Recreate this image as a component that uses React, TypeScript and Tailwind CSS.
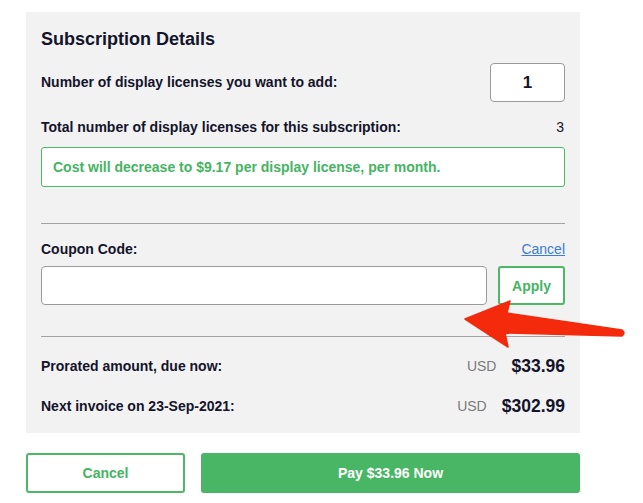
import React from "react";

const font = { fontFamily: '"Liberation Sans", Arial, sans-serif' };

function AmountRow({ label, amount }: { label: string; amount: string }) {
  return (
    <div className="flex h-[24px] items-center justify-between">
      <span className="text-[14px] font-bold text-[#14142b]">{label}</span>
      <span className="flex items-center gap-[15px]">
        <span className="text-[14px] text-[#7a7a7a]">USD</span>
        <span className="text-[17.5px] font-bold text-[#14142b]">{amount}</span>
      </span>
    </div>
  );
}

export default function App() {
  return (
    <div
      className="relative h-[503px] w-[643px] overflow-hidden bg-white pl-[26px] pt-[12px]"
      style={font}
    >
      {/* Panel */}
      <div className="w-[554px] bg-[#f2f2f2] px-[15px] pb-[15px] pt-[16px]">
        <h2 className="text-[18px] font-bold leading-[22px] text-[#14142b]">
          Subscription Details
        </h2>

        <div className="mt-[13px] flex items-center justify-between">
          <span className="text-[14px] font-bold text-[#14142b]">
            Number of display licenses you want to add:
          </span>
          <div className="flex h-[39px] w-[75px] items-center justify-center rounded-[4px] border border-[#9a9a9a] bg-white text-[17px] font-bold text-[#14142b]">
            1
          </div>
        </div>

        <div className="mt-[15px] flex h-[20px] items-center justify-between">
          <span className="text-[14px] font-bold text-[#14142b]">
            Total number of display licenses for this subscription:
          </span>
          <span className="pr-[1px] text-[14px] text-[#14142b]">3</span>
        </div>

        <div className="mt-[10px] flex h-[40px] items-center rounded-[3px] border border-[#4cb866] bg-white px-[11px] text-[14px] font-bold text-[#45b462]">
          Cost will decrease to $9.17 per display license, per month.
        </div>

        <div className="mt-[36px] h-px bg-[#a3a3a3]" />

        <div className="mt-[15px] flex h-[20px] items-center justify-between">
          <span className="text-[14px] font-bold text-[#14142b]">Coupon Code:</span>
          <a className="text-[14px] text-[#3b7dd3] underline">Cancel</a>
        </div>

        <div className="mt-[7px] flex gap-[11px]">
          <input className="h-[39px] flex-1 rounded-[4px] border border-[#9a9a9a] bg-white" />
          <button className="h-[39px] w-[67px] rounded-[3px] border-2 border-[#4cb866] bg-white pt-[1px] text-[14px] font-bold text-[#45b462]">
            Apply
          </button>
        </div>

        <div className="mt-[31px] h-px bg-[#a3a3a3]" />

        <div className="mt-[17px]">
          <AmountRow label="Prorated amount, due now:" amount="$33.96" />
        </div>
        <div className="mt-[16px]">
          <AmountRow label="Next invoice on 23-Sep-2021:" amount="$302.99" />
        </div>
      </div>

      {/* Buttons */}
      <div className="mt-[20px] flex w-[554px] gap-[16px]">
        <button className="h-[40px] w-[159px] rounded-[3px] border-2 border-[#4cb866] bg-white text-[14px] font-bold text-[#45b462]">
          Cancel
        </button>
        <button className="h-[40px] flex-1 rounded-[3px] bg-[#48b664] text-[14px] font-bold text-white">
          Pay $33.96 Now
        </button>
      </div>

      {/* Annotation arrow */}
      <svg
        className="pointer-events-none absolute left-0 top-0"
        width="643"
        height="503"
        viewBox="0 0 643 503"
      >
        <path
          d="M465 319 L510 301 L507 313 L622 330 Q626 333 622 336 L505 333 L508 347 Z"
          fill="#f42a0c"
          stroke="#f42a0c"
          strokeWidth="1.5"
          strokeLinejoin="round"
        />
      </svg>
    </div>
  );
}
